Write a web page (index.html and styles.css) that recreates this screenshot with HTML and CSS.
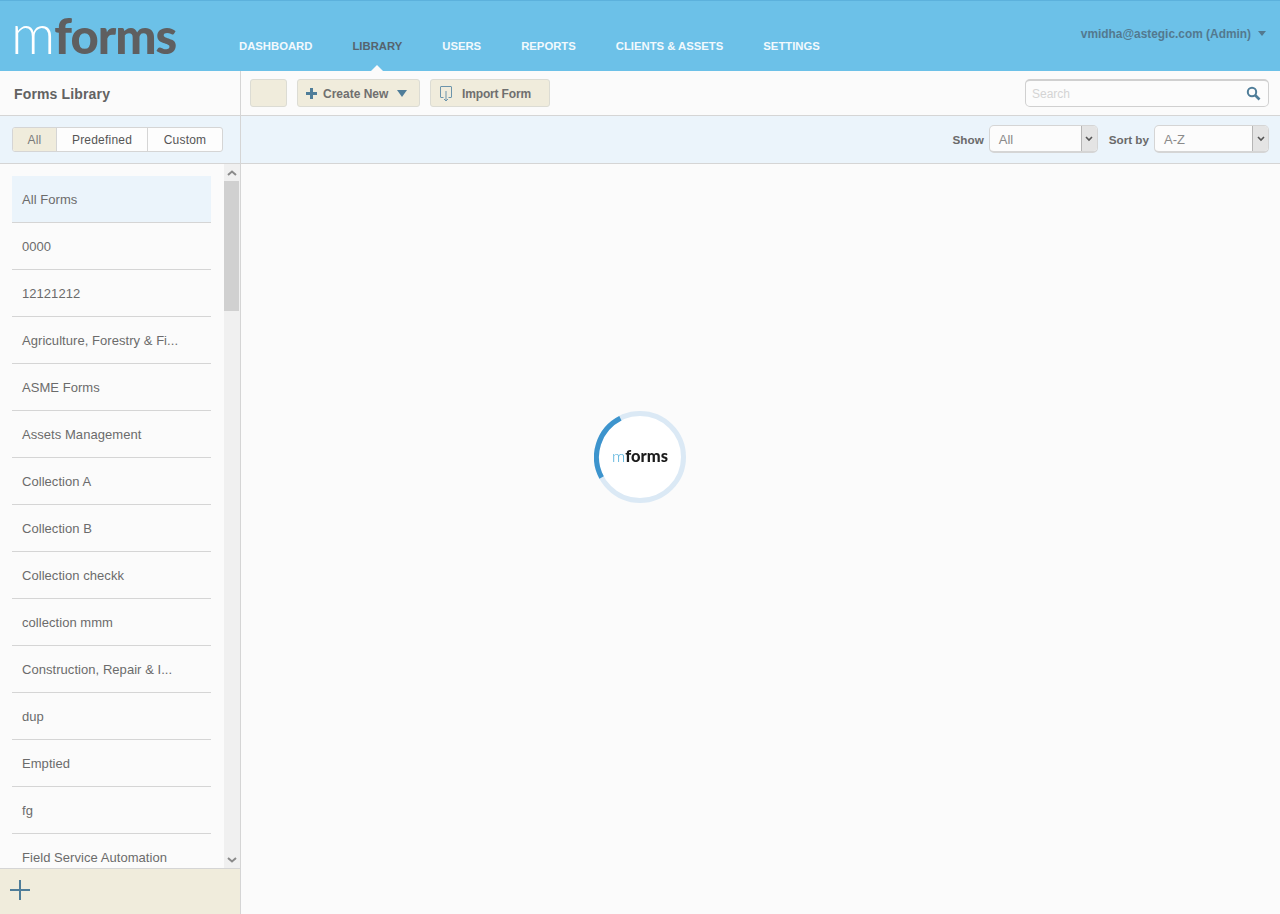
FILE: index.html
```html
<!DOCTYPE html>
<html lang="en">

<head>
    <meta charset="UTF-8" />
    <title>mForms - Library</title>
    <link rel="stylesheet" href="styles.css">
</head>

<body>
    <div class="topbar">
        <div class="logo"><span class="logo-m">m</span><span class="logo-forms">forms</span></div>
        <div class="nav">
            <a class="nav-item">DASHBOARD</a>
            <a class="nav-item active">LIBRARY</a>
            <a class="nav-item">USERS</a>
            <a class="nav-item">REPORTS</a>
            <a class="nav-item">CLIENTS &amp; ASSETS</a>
            <a class="nav-item">SETTINGS</a>
        </div>
        <div class="user">vmidha@astegic.com (Admin)<span class="user-arrow"></span></div>
    </div>

    <div class="page">
        <div class="side">
            <div class="side-title">Forms Library</div>
            <div class="side-filter">
                <div class="tabs">
                    <div class="tab tab-all on">All</div>
                    <div class="tab tab-pre">Predefined</div>
                    <div class="tab tab-cus">Custom</div>
                </div>
            </div>
            <div class="side-list">
                <div class="list">
                    <div class="list-item selected">All Forms</div>
                    <div class="list-item">0000</div>
                    <div class="list-item">12121212</div>
                    <div class="list-item">Agriculture, Forestry &amp; Fi...</div>
                    <div class="list-item">ASME Forms</div>
                    <div class="list-item">Assets Management</div>
                    <div class="list-item">Collection A</div>
                    <div class="list-item">Collection B</div>
                    <div class="list-item">Collection checkk</div>
                    <div class="list-item">collection mmm</div>
                    <div class="list-item">Construction, Repair &amp; I...</div>
                    <div class="list-item">dup</div>
                    <div class="list-item">Emptied</div>
                    <div class="list-item">fg</div>
                    <div class="list-item">Field Service Automation</div>
                </div>
                <div class="scroll">
                    <div class="scroll-btn">
                        <svg width="10" height="6" viewBox="0 0 10 6"><path d="M1 5 L5 1.5 L9 5" fill="none" stroke="#8a8a8a" stroke-width="2" /></svg>
                    </div>
                    <div class="scroll-thumb"></div>
                    <div class="scroll-rest"></div>
                    <div class="scroll-btn">
                        <svg width="10" height="6" viewBox="0 0 10 6"><path d="M1 1 L5 4.5 L9 1" fill="none" stroke="#8a8a8a" stroke-width="2" /></svg>
                    </div>
                </div>
            </div>
            <div class="side-foot">
                <svg width="20" height="20" viewBox="0 0 20 20"><path d="M0 10 H20 M10 0 V20" stroke="#4f7d99" stroke-width="2" /></svg>
            </div>
        </div>

        <div class="main">
            <div class="toolbar">
                <div class="btn btn-blank"></div>
                <div class="btn btn-create">
                    <svg width="11" height="11" viewBox="0 0 11 11"><path d="M0 5.5 H11 M5.5 0 V11" stroke="#4f7d99" stroke-width="3" /></svg>
                    <span>Create New</span>
                    <span class="btn-arrow"></span>
                </div>
                <div class="btn btn-import">
                    <svg width="12" height="16" viewBox="0 0 12 16"><path d="M3.5 11.5 H1 a0.5 0.5 0 0 1 -0.5 -0.5 V1 a0.5 0.5 0 0 1 0.5 -0.5 H11 a0.5 0.5 0 0 1 0.5 0.5 V11 a0.5 0.5 0 0 1 -0.5 0.5 H8.5 M6 5 V15 M4 13 L6 15 L8 13" fill="none" stroke="#6c94ab" stroke-width="1" /></svg>
                    <span>Import Form</span>
                </div>
                <div class="search">
                    <span class="search-text">Search</span>
                    <svg width="15" height="15" viewBox="0 0 15 15"><circle cx="6" cy="6" r="4.2" fill="none" stroke="#4f7d99" stroke-width="2" /><path d="M9 9 L13.5 13.5" stroke="#4f7d99" stroke-width="2.6" /></svg>
                </div>
            </div>
            <div class="filterbar">
                <span class="filter-label">Show</span>
                <div class="select select-show">
                    <span class="select-text">All</span>
                    <span class="select-btn"><svg width="8" height="6" viewBox="0 0 8 6"><path d="M1 1 L4 4 L7 1" fill="none" stroke="#555" stroke-width="1.6" /></svg></span>
                </div>
                <span class="filter-label label-sort">Sort by</span>
                <div class="select select-sort">
                    <span class="select-text">A-Z</span>
                    <span class="select-btn"><svg width="8" height="6" viewBox="0 0 8 6"><path d="M1 1 L4 4 L7 1" fill="none" stroke="#555" stroke-width="1.6" /></svg></span>
                </div>
            </div>
            <div class="content"></div>
        </div>
    </div>

    <!-- loader -->
    <div class="loader">
        <svg class="loader-ring" width="92" height="92" viewBox="0 0 92 92">
            <circle cx="46" cy="46" r="43.5" fill="#fff" stroke="#dbe9f5" stroke-width="5" />
            <path d="M26.4 7.2 A43.5 43.5 0 0 0 7.6 66.5" fill="none" stroke="#3d94cd" stroke-width="5" />
        </svg>
        <div class="loader-logo"><span class="loader-m">m</span><span class="loader-forms">forms</span></div>
    </div>
</body>

</html>
```

FILE: styles.css
```css
* {
    box-sizing: border-box;
}

html,
body {
    height: 100%;
}

body {
    margin: 0;
    height: 914px;
    overflow: hidden;
    display: flex;
    flex-direction: column;
    background-color: #fbfbfb;
    font-family: "Liberation Sans", Arial, sans-serif;
    font-size: 12px;
    color: #6a6a6a;
}

/* top bar */
.topbar {
    flex: none;
    height: 71px;
    display: flex;
    background-color: #6cc1e8;
    border-top: 1px solid #5cb1dc;
}

.logo {
    width: 239px;
    padding: 3px 0 0 11px;
    font-family: Lato, sans-serif;
    font-size: 49px;
    line-height: 58px;
}

.logo-m {
    color: #fff;
    font-weight: 300;
    font-size: 55px;
    letter-spacing: -1px;
}

.logo-forms {
    color: #5f5f60;
    font-weight: 900;
    letter-spacing: -1px;
}

.nav {
    display: flex;
    align-items: flex-start;
    gap: 40px;
    padding-top: 38px;
}

.nav-item {
    position: relative;
    font-weight: bold;
    font-size: 11.3px;
    line-height: 15px;
    color: #f2f9fd;
}

.nav-item.active {
    color: #56636e;
}

.nav-item.active::after {
    content: "";
    position: absolute;
    left: 50%;
    bottom: -17px;
    margin-left: -6px;
    border-left: 6px solid transparent;
    border-right: 6px solid transparent;
    border-bottom: 6px solid #fbfbfb;
}

.user {
    margin-left: auto;
    padding: 26px 14px 0 0;
    font-size: 11.9px;
    font-weight: bold;
    line-height: 15px;
    color: #53798f;
}

.user-arrow {
    display: inline-block;
    margin-left: 7px;
    vertical-align: 2px;
    border-left: 4px solid transparent;
    border-right: 4px solid transparent;
    border-top: 5px solid #53798f;
}

/* page */
.page {
    flex: 1;
    display: flex;
    min-height: 0;
}

.side {
    width: 241px;
    flex: none;
    display: flex;
    flex-direction: column;
    border-right: 1px solid #d5d5d5;
}

.side-title {
    height: 45px;
    padding: 15px 0 0 14px;
    font-size: 14px;
    line-height: 16px;
    font-weight: bold;
    letter-spacing: 0.15px;
    color: #626262;
    border-bottom: 1px solid #d5d5d5;
}

.side-filter {
    height: 48px;
    padding: 11px 0 0 12px;
    background-color: #ebf4fb;
    border-bottom: 1px solid #d5d5d5;
}

.tabs {
    display: flex;
    width: 211px;
    height: 25px;
    background-color: #fdfdfd;
    border: 1px solid #d5d5d5;
    border-radius: 3px;
    overflow: hidden;
}

.tab {
    text-align: center;
    line-height: 25px;
    letter-spacing: 0.2px;
    color: #555;
    border-right: 1px solid #d5d5d5;
}

.tab-all {
    width: 44px;
}

.tab-pre {
    width: 91px;
}

.tab-cus {
    flex: 1;
    border-right: none;
}

.tab.on {
    background-color: #f0ecdc;
    color: #7a7a7a;
}

.side-list {
    flex: 1;
    min-height: 0;
    display: flex;
    overflow: hidden;
}

.list {
    width: 224px;
    flex: none;
    padding: 12px 13px 0 12px;
    overflow: hidden;
}

.list-item {
    height: 47px;
    padding-left: 10px;
    font-size: 13px;
    letter-spacing: 0.05px;
    line-height: 47px;
    color: #6b6b6b;
    border-bottom: 1px solid #d5d5d5;
}

.list-item.selected {
    background-color: #ebf4fb;
}

.scroll {
    width: 16px;
    display: flex;
    flex-direction: column;
    background-color: #f0f0f0;
}

.scroll-btn {
    height: 17px;
    flex: none;
    display: flex;
    align-items: center;
    justify-content: center;
}

.scroll-thumb {
    height: 130px;
    flex: none;
    width: 15px;
    background-color: #d0d0d0;
}

.scroll-rest {
    flex: 1;
}

.side-foot {
    flex: none;
    height: 46px;
    padding: 11px 0 0 10px;
    background-color: #f0ecdc;
    border-top: 1px solid #d5d5d5;
}

/* main column */
.main {
    flex: 1;
    display: flex;
    flex-direction: column;
    min-width: 0;
}

.toolbar {
    height: 45px;
    display: flex;
    padding: 8px 11px 0 9px;
    border-bottom: 1px solid #d5d5d5;
}

.btn {
    height: 28px;
    display: flex;
    align-items: center;
    padding-top: 1px;
    background-color: #f0ecdc;
    border: 1px solid #dcdcd4;
    border-radius: 3px;
    font-weight: bold;
    color: #6f6f6f;
}

.btn-blank {
    width: 37px;
}

.btn-create {
    width: 123px;
    margin-left: 10px;
    padding-left: 8px;
}

.btn-create span:first-of-type {
    margin-left: 6px;
}

.btn-arrow {
    margin-left: 9px;
    border-left: 5px solid transparent;
    border-right: 5px solid transparent;
    border-top: 7px solid #4f7d99;
}

.btn-import {
    width: 120px;
    margin-left: 10px;
    padding-left: 9px;
}

.btn-import span {
    margin-left: 10px;
    letter-spacing: -0.15px;
}

.search {
    width: 244px;
    height: 28px;
    margin-left: auto;
    display: flex;
    align-items: center;
    justify-content: space-between;
    padding: 0 7px 0 6px;
    background-color: #fcfcfc;
    border: 1px solid #d0d0d0;
    border-top-width: 2px;
    border-radius: 5px;
}

.search-text {
    color: #d4d4d4;
}

.filterbar {
    height: 48px;
    display: flex;
    align-items: flex-start;
    padding: 9px 11px 0 0;
    justify-content: flex-end;
    background-color: #ebf4fb;
    border-bottom: 1px solid #d5d5d5;
}

.filter-label {
    font-size: 11.7px;
    font-weight: bold;
    line-height: 30px;
    color: #6a6a6a;
}

.label-sort {
    margin-left: 11px;
}

.select {
    height: 28px;
    margin-left: 5px;
    display: flex;
    justify-content: space-between;
    background-color: #fcfcfc;
    border: 1px solid #d5d5d5;
    border-bottom-width: 2px;
    border-radius: 5px;
    overflow: hidden;
}

.select-show {
    width: 109px;
}

.select-sort {
    width: 115px;
}

.select-text {
    padding-left: 9px;
    font-size: 13px;
    line-height: 27px;
    color: #8a8a8a;
}

.select-btn {
    width: 16px;
    display: flex;
    align-items: center;
    justify-content: center;
    background-color: #e4e4e4;
    border-left: 1px solid #b5b5b5;
}

.content {
    flex: 1;
}

/* loader sits over the page */
.loader {
    position: fixed;
    left: 594px;
    top: 411px;
    width: 92px;
    height: 92px;
}

.loader-ring {
    display: block;
}

.loader-logo {
    position: absolute;
    left: 0;
    right: 0;
    top: 35px;
    text-align: center;
    font-family: Lato, sans-serif;
    font-size: 16.5px;
    line-height: 20px;
}

.loader-m {
    color: #45a9d8;
    font-weight: 300;
}

.loader-forms {
    color: #1c1c1c;
    font-weight: 900;
}
```
